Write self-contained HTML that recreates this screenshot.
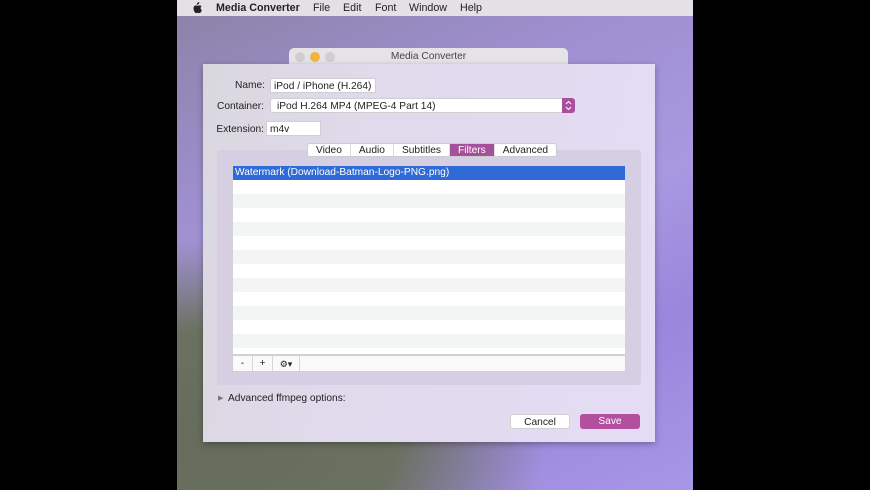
<!DOCTYPE html>
<html><head><meta charset="utf-8"><style>
*{margin:0;padding:0;box-sizing:border-box}
body{width:870px;height:490px;background:#000;position:relative;overflow:hidden;font-family:"Liberation Sans",sans-serif;font-size:10.2px;color:#222}
.screen{position:absolute;left:177px;top:0;width:516px;height:490px;overflow:hidden;
background:radial-gradient(ellipse 330px 200px at 40px 440px,#666c5c 0%,#6b7161 55%,rgba(110,118,100,0) 100%),
linear-gradient(155deg,#8a83a6 0%,#9f8fd0 30%,#a898e0 55%,#9a86dc 75%,#a797e6 100%);}
.menubar{position:absolute;left:0;top:0;width:516px;height:16px;background:#e4e1e6;font-size:10.7px;color:#222}
.menubar span{position:absolute;top:2px}
.tb{position:absolute;left:112px;top:48px;width:279px;height:18px;background:#e6e3e8;border-radius:5px 5px 0 0;border-bottom:1px solid #ccc}
.dot{position:absolute;top:4px;width:10px;height:10px;border-radius:50%;background:#cfcdd0}
.sheet{position:absolute;left:26px;top:64px;width:452px;height:378px;background:linear-gradient(100deg,#d9d7de,#e0daec 35%,#e4dcf4);box-shadow:0 2px 6px rgba(0,0,0,.3)}
.abs{position:absolute}
.field{position:absolute;background:#fff;border:1px solid #cfcfd2;height:15px;padding:2px 3px 0;line-height:12px;white-space:nowrap;overflow:hidden}
.lbl{position:absolute;text-align:right}
.tabs{position:absolute;left:104px;top:79px;height:14px;display:flex;border:1px solid #ccc;background:#fff;border-radius:3px;overflow:hidden;z-index:2}
.tabs div{padding:0 8px;line-height:13px;border-right:1px solid #ddd}
.group{position:absolute;left:14px;top:86px;width:424px;height:235px;background:#d6cfe3;border-radius:3px}
.table{position:absolute;left:15px;top:15px;width:394px;height:190px;background:repeating-linear-gradient(#f3f4f4 0 14px,#fff 14px 28px);border:1px solid #d3d3d5}
.sel{position:absolute;left:0;top:0;width:100%;height:14px;background:#2f6ad6;color:#fff;padding-left:2px;line-height:14px}
.bar{position:absolute;left:15px;top:205px;width:394px;height:17px;background:#fafafa;border:1px solid #d0d0d2;display:flex}
.bar div{border-right:1px solid #d6d6d6;text-align:center;line-height:16px}
.btn{position:absolute;top:350px;width:60px;height:15px;border-radius:3px;text-align:center;line-height:15px}
</style></head><body>
<div class="screen">
 <div class="menubar">
  <svg class="abs" style="left:15px;top:2px" width="11" height="12" viewBox="0 0 11 12"><path d="M7.3 0c.1.8-.2 1.5-.7 2s-1.1.8-1.8.8c-.1-.7.3-1.5.7-1.9C6 .4 6.7 0 7.3 0zM9.6 4.2c-.6.4-1 1-1 1.9 0 1 .6 1.6 1.3 1.9-.3 1-1.2 3.1-2.4 3.1-.7 0-.9-.4-1.7-.4s-1.1.4-1.7.4C2.9 11.1 1.5 8.6 1.5 6.4c0-1.9 1.2-3 2.4-3 .7 0 1.3.5 1.7.5s1.1-.5 1.9-.5c.7 0 1.6.3 2.1.8z" fill="#222"/></svg>
  <span style="left:39px;font-weight:bold">Media Converter</span>
  <span style="left:136px">File</span><span style="left:166px">Edit</span><span style="left:198px">Font</span><span style="left:232px">Window</span><span style="left:283px">Help</span>
 </div>
 <div class="tb"><div class="dot" style="left:6px"></div><div class="dot" style="left:21px;background:#f2b440"></div><div class="dot" style="left:36px"></div>
  <div class="abs" style="left:0;width:100%;top:3px;text-align:center;color:#444">Media Converter</div></div>
 <div class="sheet">
  <div class="lbl" style="left:0;width:62px;top:16px">Name:</div>
  <div class="field" style="left:67px;top:14px;width:106px">iPod / iPhone (H.264)</div>
  <div class="lbl" style="left:0;width:61px;top:37px">Container:</div>
  <div class="field" style="left:67px;top:34px;width:305px;border-radius:3px;padding-left:6px">iPod H.264 MP4 (MPEG-4 Part 14)</div>
  <div class="abs" style="left:359px;top:34px;width:13px;height:15px;background:#a8509e;border-radius:0 3px 3px 0"><svg width="13" height="15"><path d="M4 6l2.5-2.5L9 6M4 9l2.5 2.5L9 9" stroke="#fff" fill="none" stroke-width="1"/></svg></div>
  <div class="lbl" style="left:0;width:61px;top:60px">Extension:</div>
  <div class="field" style="left:63px;top:57px;width:55px">m4v</div>
  <div class="group"></div>
  <div class="tabs"><div>Video</div><div>Audio</div><div>Subtitles</div><div style="background:#a6509c;color:#fff">Filters</div><div style="border:none">Advanced</div></div>
  <div class="abs" style="left:14px;top:86px;width:424px;height:235px">
   <div class="table"><div class="sel">Watermark (Download-Batman-Logo-PNG.png)</div></div>
   <div class="bar"><div style="width:20px">-</div><div style="width:20px">+</div><div style="width:27px;font-size:9px">⚙▾</div></div>
  </div>
  <div class="abs" style="left:15px;top:330px;font-size:7px;color:#777">▶</div>
  <div class="abs" style="left:25px;top:329px">Advanced ffmpeg options:</div>
  <div class="btn" style="left:307px;background:#fff;border:1px solid #d0d0d0">Cancel</div>
  <div class="btn" style="left:377px;background:#b2509f;color:#fff">Save</div>
 </div>
</div>
</body></html>
